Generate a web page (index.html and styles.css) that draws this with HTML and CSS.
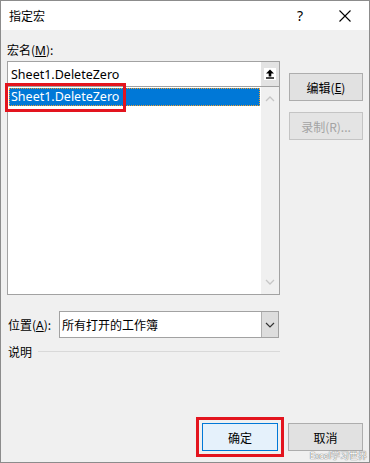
FILE: index.html
```html
<!DOCTYPE html>
<html lang="zh-CN">
<head>
<meta charset="utf-8">
<title>指定宏</title>
<link rel="stylesheet" href="styles.css">
</head>
<body>
<div class="window">
  <div class="titlebar">
    <span class="title">指定宏</span>
    <span class="help">?</span>
    <span class="close"><svg width="12" height="12" viewBox="0 0 12 12"><path d="M0.5 0.5 L11.5 11.5 M11.5 0.5 L0.5 11.5" stroke="#000" stroke-width="1.1" fill="none"/></svg></span>
  </div>
  <div class="content">
    <div class="top">
      <div class="leftcol">
        <div class="label">宏名(<u>M</u>):</div>
        <div class="input">
          <span class="input-text">Sheet1.DeleteZero</span>
          <span class="upbtn"><span class="upbox"><svg width="10" height="10" viewBox="0 0 10 10"><path d="M5 0.5 L9 4.5 L6.3 4.5 L6.3 7.5 L3.7 7.5 L3.7 4.5 L1 4.5 Z" fill="#000"/><rect x="1" y="8.3" width="8" height="1.4" fill="#000"/></svg></span></span>
        </div>
        <div class="list">
          <div class="items">
            <div class="item selected">Sheet1.DeleteZero</div>
          </div>
          <div class="scrollbar">
            <svg width="10" height="6" viewBox="0 0 10 6"><path d="M1 5 L5 1 L9 5" stroke="#c6c6c6" stroke-width="1.3" fill="none"/></svg>
            <svg width="10" height="6" viewBox="0 0 10 6"><path d="M1 1 L5 5 L9 1" stroke="#c6c6c6" stroke-width="1.3" fill="none"/></svg>
          </div>
          <div class="redbox redbox-item"></div>
        </div>
      </div>
      <div class="rightcol">
        <div class="btn">编辑(<u>E</u>)</div>
        <div class="btn disabled">录制(R)...</div>
      </div>
    </div>
    <div class="locrow">
      <div class="loclabel">位置(<u>A</u>):</div>
      <div class="combo">
        <span class="combo-text">所有打开的工作簿</span>
        <span class="combo-btn"><svg width="10" height="6" viewBox="0 0 10 6"><path d="M1 1 L5 5 L9 1" stroke="#333" stroke-width="1.2" fill="none"/></svg></span>
      </div>
    </div>
    <div class="descrow">
      <span class="desclabel">说明</span>
      <span class="descline"></span>
    </div>
    <div class="footer">
      <div class="okwrap">
        <div class="btn ok">确定</div>
        <div class="redbox redbox-ok"></div>
      </div>
      <div class="btn">取消</div>
      <span class="watermark">Excel学习世界</span>
    </div>
  </div>
</div>
</body>
</html>
```
FILE: styles.css
```css
* { box-sizing: border-box; }
html, body { margin: 0; padding: 0; }
body {
  font-family: "Noto Sans", "Noto Sans CJK SC", sans-serif;
  font-size: 12px;
  color: #000;
  background: #fff;
}
u { text-decoration: underline; text-underline-offset: 1px; }
.window {
  width: 370px;
  height: 463px;
  border: 1px solid #8c8c8c;
  display: flex;
  flex-direction: column;
  background: #f0f0f0;
}
.titlebar {
  height: 29px;
  background: #fff;
  display: flex;
  align-items: center;
  flex: none;
}
.title {
  margin-left: 8px;
  font-family: "Noto Sans CJK SC", sans-serif;
  font-size: 12px;
}
.help {
  margin-left: auto;
  font-family: "Noto Sans", sans-serif;
  font-size: 14px;
  margin-right: 36px;
}
.close {
  display: flex;
  margin-right: 18px;
}
.content {
  flex: 1;
  display: flex;
  flex-direction: column;
  padding: 11px 6px 11px 6px;
  position: relative;
}
.top {
  display: flex;
  gap: 9px;
}
.leftcol {
  width: 273px;
  display: flex;
  flex-direction: column;
}
.label {
  height: 18px;
  line-height: 18px;
  margin-bottom: 2px;
  font-family: "Noto Sans CJK SC", sans-serif;
}
.label u, .loclabel u, .btn u { font-family: "Noto Sans", sans-serif; }
.input {
  height: 26px;
  border: 1px solid #a2a2a2;
  background: #fff;
  display: flex;
  align-items: center;
}
.input-text {
  flex: 1;
  padding-left: 3px;
  font-size: 12.5px;
}
.upbtn {
  width: 18px;
  height: 100%;
  background: #e3e3e3;
  display: flex;
  align-items: center;
  justify-content: center;
}
.upbox {
  width: 12px;
  height: 12px;
  background: #fff;
  display: flex;
  align-items: center;
  justify-content: center;
}
.list {
  height: 208px;
  border: 1px solid #a2a2a2;
  border-top: none;
  background: #fff;
  display: flex;
  position: relative;
}
.items {
  flex: 1;
  padding: 1px 1px;
}
.item {
  height: 18px;
  line-height: 17px;
  padding-left: 2px;
  font-size: 12.5px;
}
.selected {
  background: #0078d7;
  color: #fff;
  outline: 1px dotted #f0a030;
  outline-offset: -1px;
}
.scrollbar {
  width: 18px;
  background: #f0f0f0;
  display: flex;
  flex-direction: column;
  justify-content: space-between;
  align-items: center;
  padding: 9px 0 9px;
}
.redbox {
  position: absolute;
  border: 3px solid #e3141e;
  pointer-events: none;
}
.redbox-item {
  left: -3px;
  top: -4px;
  width: 121px;
  height: 29px;
}
.rightcol {
  width: 74px;
  padding-top: 32px;
  display: flex;
  flex-direction: column;
  gap: 11px;
}
.btn {
  height: 28px;
  border: 1px solid #adadad;
  background: #e1e1e1;
  display: flex;
  align-items: center;
  justify-content: center;
  font-family: "Noto Sans CJK SC", sans-serif;
}
.btn.disabled {
  color: #a3a3a3;
  border-color: #c4c4c4;
  background: #e4e4e4;
}
.locrow {
  display: flex;
  align-items: center;
  margin-top: 16px;
}
.loclabel {
  width: 52px;
  padding-left: 1px;
  font-family: "Noto Sans CJK SC", sans-serif;
}
.combo {
  width: 220px;
  height: 27px;
  border: 1px solid #a2a2a2;
  background: #fff;
  display: flex;
  align-items: center;
  font-family: "Noto Sans CJK SC", sans-serif;
}
.combo-text {
  flex: 1;
  padding-left: 2px;
}
.combo-btn {
  width: 17px;
  height: 100%;
  background: #dddddd;
  border-left: 1px solid #b0b0b0;
  display: flex;
  align-items: center;
  justify-content: center;
}
.descrow {
  display: flex;
  align-items: center;
  margin-top: 4px;
  height: 18px;
  font-family: "Noto Sans CJK SC", sans-serif;
  width: 273px;
}
.desclabel { padding-left: 1px; }
.descline {
  flex: 1;
  height: 1px;
  background: #d9d9d9;
  margin-left: 6px;
}
.footer {
  margin-top: auto;
  display: flex;
  justify-content: flex-end;
  gap: 10px;
  position: relative;
}
.okwrap {
  position: relative;
  width: 76px;
}
.btn.ok {
  border-color: #0078d7;
  background: #e5f1fb;
}
.footer > .btn { width: 75px; }
.redbox-ok {
  left: -6px;
  top: -6px;
  width: 88px;
  height: 40px;
}
.watermark {
  position: absolute;
  right: -4px;
  bottom: -11px;
  font-family: "Noto Sans CJK SC", sans-serif;
  font-size: 9px;
  color: #fff;
  text-shadow: 0 0 1px #666, 0 0 1px #666;
}
```
